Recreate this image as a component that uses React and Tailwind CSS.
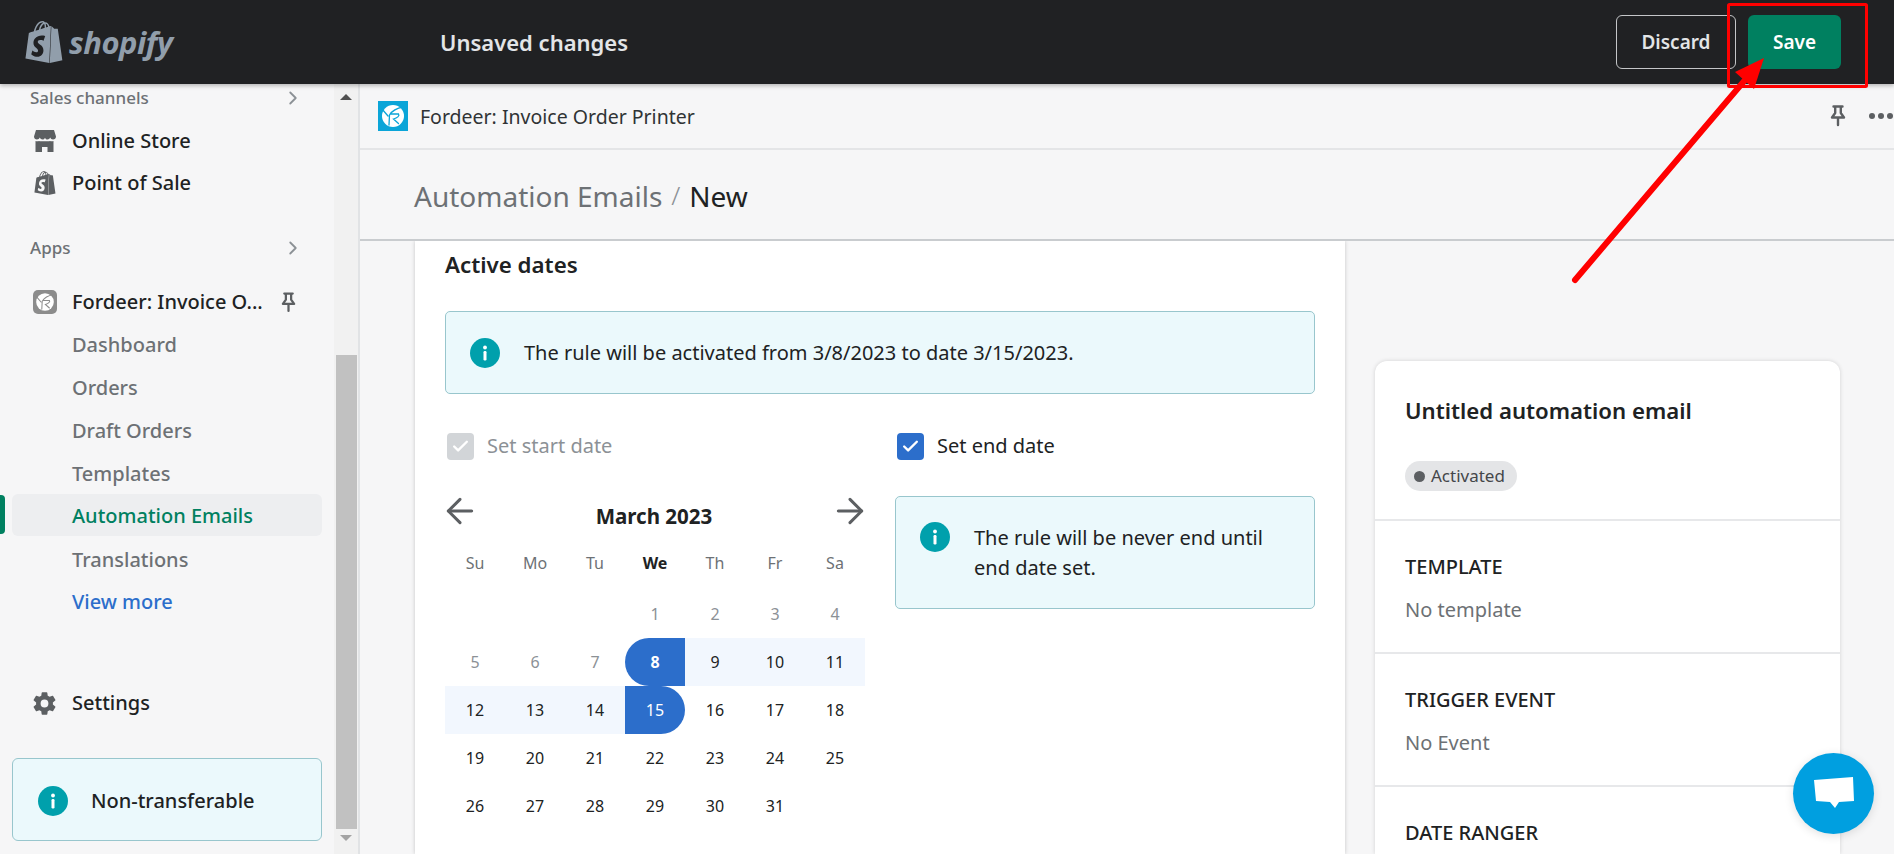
import { ChevronRight, ArrowLeft, ArrowRight, Check } from 'lucide-react';
import { SiShopify } from 'react-icons/si';
import { IoSettingsSharp } from 'react-icons/io5';

const FONT = "font-['Noto_Sans',sans-serif]";

function InfoIcon({ className = '' }) {
  return (
    <svg viewBox="0 0 30 30" className={`w-[30px] h-[30px] shrink-0 ${className}`}>
      <circle cx="15" cy="15" r="15" fill="#00a0ac" />
      <circle cx="15" cy="9.5" r="1.9" fill="#fff" />
      <rect x="13.5" y="13" width="3" height="9.5" rx="1.2" fill="#fff" />
    </svg>
  );
}

function PinIcon({ className = '' }) {
  return (
    <svg viewBox="0 0 16 22" fill="none" stroke="#5c5f62" strokeWidth="2.4" className={className}>
      <path d="M3.5 1.5h9M5.2 1.5v6.5L2 12.5h12L10.8 8V1.5M8 12.5V20" strokeLinejoin="round" strokeLinecap="round" />
    </svg>
  );
}

function StoreIcon() {
  return (
    <svg viewBox="0 0 24 24" className="w-[24px] h-[24px]" fill="#5c5f62">
      <path d="M3 1h18l2 6.5c0 1.7-1.3 3-3 3-1.3 0-2.4-.8-2.8-2-.4 1.2-1.6 2-2.8 2s-2-.7-2.4-1.8c-.4 1.1-1.3 1.8-2.4 1.8-1.2 0-2.4-.8-2.8-2-.4 1.2-1.5 2-2.8 2-1.7 0-3-1.3-3-3L3 1z" />
      <path d="M2.5 12c1 .4 2.6.4 3.5 0c1 .4 2 .5 3 .2h5c1 .3 2 .2 3-.2.9.4 2.5.4 3.5 0V23h-6v-5H9v5H2.5V12z" />
    </svg>
  );
}

function FordeerMark({ size, bg, round }) {
  return (
    <svg viewBox="0 0 30 30" style={{ width: size, height: size }} className={round ? 'rounded-[5px]' : ''}>
      <rect width="30" height="30" fill={bg} />
      <circle cx="15" cy="15" r="11" fill="#fff" />
      <path d="M25 6 C19 7 14 10 11.5 14 L11 24M13 13h7.5c1.5 2-1.5 4-5 5l5 4.5M4 8l6 7" stroke={bg} strokeWidth="1.3" fill="none" strokeLinecap="round" />
    </svg>
  );
}

function SubItem({ children, link, className = '' }) {
  const color = link ? 'text-[#2c6ecb]' : 'text-[#6d7175]';
  return (
    <div className={`h-[43px] pl-[72px] flex items-center text-[20px] font-medium ${color} ${className}`}>{children}</div>
  );
}

function NavItem({ icon, children, className = '' }) {
  return (
    <div className={`h-[42px] flex items-center ${className}`}>
      <div className="w-[72px] pl-[33px] flex items-center shrink-0">{icon}</div>
      <span className="text-[20px] font-medium text-[#202223]">{children}</span>
    </div>
  );
}

function SectionHead({ children, className = '' }) {
  return (
    <div className={`h-[26px] pl-[30px] pr-[30px] flex items-center justify-between ${className}`}>
      <span className="text-[17px] font-medium text-[#6d7175]">{children}</span>
      <ChevronRight size={22} strokeWidth={2} className="text-[#8c9196]" />
    </div>
  );
}

function Sidebar() {
  return (
    <aside className="w-[360px] shrink-0 flex bg-[#f6f6f7] border-r-2 border-[#e1e3e5]">
      <div className="w-[334px] shrink-0 relative pt-[1px]">
        <SectionHead>Sales channels</SectionHead>
        <div className="mt-[9px]">
          <NavItem icon={<StoreIcon />}>Online Store</NavItem>
          <NavItem icon={<SiShopify size={24} className="text-[#5c5f62]" />}>Point of Sale</NavItem>
        </div>
        <SectionHead className="mt-[31px]">Apps</SectionHead>
        <div className="mt-[20px] h-[42px] flex items-center">
          <div className="w-[72px] pl-[33px] shrink-0">
            <FordeerMark size={24} bg="#8c8c8c" round />
          </div>
          <span className="text-[20px] font-medium text-[#202223] w-[198px] whitespace-nowrap overflow-hidden">Fordeer: Invoice O...</span>
          <PinIcon className="w-[15px] h-[21px] ml-[11px]" />
        </div>
        <SubItem>Dashboard</SubItem>
        <SubItem>Orders</SubItem>
        <SubItem>Draft Orders</SubItem>
        <SubItem>Templates</SubItem>
        <div className="relative">
          <div className="absolute left-0 top-[1px] w-[5px] h-[39px] rounded-r bg-[#008060]" />
          <div className="mx-[12px] h-[42px] -mt-[1px] mb-[1px] pl-[60px] pt-[2px] flex items-center rounded-[6px] bg-[#edeef0] text-[20px] font-medium text-[#008060]">
            Automation Emails
          </div>
        </div>
        <SubItem className="pt-[2px]">Translations</SubItem>
        <SubItem link>View more</SubItem>
        <NavItem className="mt-[59px]" icon={<IoSettingsSharp size={25} className="text-[#5c5f62] -ml-[1px]" />}>Settings</NavItem>
        <div className="mt-[34px] mx-[12px] h-[83px] pt-[2px] rounded-[6px] border border-[#98c6cd] bg-[#ebf9fc] flex items-center pl-[25px]">
          <InfoIcon />
          <span className="ml-[23px] text-[20px] font-medium text-[#202223]">Non-transferable</span>
        </div>
      </div>
      {/* Scrollbar */}
      <div className="w-[24px] bg-[#f1f1f1] flex flex-col items-center">
        <div className="h-[26px] flex items-center justify-center">
          <div className="w-0 h-0 border-x-[6px] border-x-transparent border-b-[6px] border-b-[#505050]" />
        </div>
        <div className="w-[21px] mt-[245px] h-[474px] bg-[#c1c1c1]" />
        <div className="mt-[6px] w-0 h-0 border-x-[6px] border-x-transparent border-t-[6px] border-t-[#a3a3a3]" />
      </div>
    </aside>
  );
}

function Banner({ className = '', children, top }) {
  return (
    <div className={`rounded-[5px] border border-[#98c6cd] bg-[#ebf9fc] flex ${top ? 'items-start' : 'items-center'} ${className}`}>
      {children}
    </div>
  );
}

const weeks = [
  [null, null, null, 1, 2, 3, 4],
  [5, 6, 7, 8, 9, 10, 11],
  [12, 13, 14, 15, 16, 17, 18],
  [19, 20, 21, 22, 23, 24, 25],
  [26, 27, 28, 29, 30, 31, null],
];

function DayCell({ day }) {
  if (!day) return <div className="h-[48px]" />;
  let cls = 'text-[#202223]';
  if (day < 8) cls = 'text-[#8c9196]';
  if (day > 8 && day < 15) cls = 'bg-[#f2f7fe] text-[#202223]';
  if (day === 8) cls = 'bg-[#2c6ecb] text-white font-bold rounded-l-[24px]';
  if (day === 15) cls = 'bg-[#2c6ecb] text-white rounded-r-[24px]';
  return <div className={`h-[48px] flex items-center justify-center text-[16px] ${cls}`}>{day}</div>;
}

function Calendar() {
  const heads = ['Su', 'Mo', 'Tu', 'We', 'Th', 'Fr', 'Sa'];
  return (
    <div className="w-[420px]">
      <div className="h-[42px] mb-[12px] flex items-center justify-between relative">
        <ArrowLeft size={40} strokeWidth={1.8} className="text-[#5c5f62] -ml-[5px] -mt-[10px]" />
        <span className="text-[20.5px] font-bold text-[#202223] -ml-[2px]">March 2023</span>
        <ArrowRight size={40} strokeWidth={1.8} className="text-[#5c5f62] -mr-[5px] -mt-[10px]" />
      </div>
      <div className="grid grid-cols-7">
        {heads.map((h) => (
          <div key={h} className={`h-[28px] mb-[13px] flex items-center justify-center text-[16px] ${h === 'We' ? 'font-bold text-[#202223]' : 'text-[#6d7175]'}`}>
            {h}
          </div>
        ))}
      </div>
      <div className="grid grid-cols-7">
        {weeks.flat().map((d, i) => (
          <DayCell key={i} day={d} />
        ))}
      </div>
    </div>
  );
}

function SideSection({ title, value }) {
  return (
    <div className="h-[133px] border-b-2 border-[#e7e8ea] pl-[30px] pt-[31px]">
      <div className="text-[20px] font-medium text-[#202223] leading-[30px]">{title}</div>
      {value && <div className="mt-[13px] text-[20px] text-[#6d7175] leading-[30px]">{value}</div>}
    </div>
  );
}

function Overlay() {
  return (
    <svg className="absolute inset-0 z-20 w-full h-full pointer-events-none" viewBox="0 0 1894 854">
      <rect x="1728.5" y="4.5" width="138" height="82" fill="none" stroke="#ff0000" strokeWidth="3" rx="1" />
      <line x1="1575" y1="280" x2="1745" y2="80" stroke="#ff0000" strokeWidth="6" strokeLinecap="round" />
      <polygon points="1764,58 1735,72 1754,89" fill="#ff0000" />
    </svg>
  );
}

export default function App() {
  return (
    <div className={`relative h-screen w-full overflow-hidden bg-[#f6f6f7] flex flex-col ${FONT}`}>
      {/* Top bar */}
      <header className="h-[84px] shrink-0 bg-[#202123] flex items-center shadow-[0_2px_4px_rgba(0,0,0,0.25)] relative z-10">
        <div className="w-[440px] shrink-0 pl-[23px] flex items-center">
          <SiShopify size={42} className="text-[#919eab]" />
          <span className="ml-[4px] text-[31px] font-bold italic text-[#919eab] tracking-[-0.5px]">shopify</span>
        </div>
        <span className="text-[22px] font-semibold text-[#e3e5e7]">Unsaved changes</span>
        <div className="ml-auto flex items-center gap-[12px] pr-[53px]">
          <button className="w-[120px] h-[54px] rounded-[6px] border border-[#c4c6c8] text-[19px] font-semibold text-[#e3e5e7]">Discard</button>
          <button className="w-[93px] h-[54px] rounded-[6px] bg-[#008060] text-[19px] font-semibold text-white">Save</button>
        </div>
      </header>

      <div className="flex-1 flex min-h-0">
        <Sidebar />
        <main className="flex-1 min-w-0 flex flex-col">
          <div className="h-[66px] shrink-0 border-b-2 border-[#e4e5e7] flex items-center pl-[18px]">
            <FordeerMark size={30} bg="#0ba5d8" />
            <span className="ml-[12px] mt-[2px] text-[19.5px] text-[#303335]">Fordeer: Invoice Order Printer</span>
            <PinIcon className="ml-auto w-[16px] h-[22px]" />
            <div className="ml-[23px] mr-[1px] flex gap-[3px]">
              <span className="w-[6px] h-[6px] rounded-full bg-[#5c5f62]" />
              <span className="w-[6px] h-[6px] rounded-full bg-[#5c5f62]" />
              <span className="w-[6px] h-[6px] rounded-full bg-[#5c5f62]" />
            </div>
          </div>
          <div className="h-[91px] shrink-0 border-b-2 border-[#c9cccf] pl-[54px] flex items-center">
            <span className="text-[28px] text-[#6d7175] mt-[2px]">Automation Emails</span>
            <span className="mx-[9px] text-[26px] font-light text-[#8c9196] mt-[2px]">/</span>
            <span className="text-[28px] text-[#202223] mt-[2px]">New</span>
          </div>
          <div className="flex-1 min-h-0 flex pl-[55px] overflow-hidden">
            {/* Main card */}
            <div className="w-[930px] shrink-0 h-full bg-white shadow-[0_0_4px_rgba(0,0,0,0.2)] px-[30px]">
              <h2 className="mt-[8px] h-[32px] flex items-center text-[22.3px] font-semibold text-[#202223]">Active dates</h2>
              <Banner className="mt-[30px] h-[83px] w-[870px] pl-[24px]">
                <InfoIcon />
                <span className="ml-[24px] text-[20px] text-[#202223]">The rule will be activated from 3/8/2023 to date 3/15/2023.</span>
              </Banner>
              <div className="mt-[25px] flex">
                <div className="w-[450px] shrink-0">
                  <div className="h-[54px] flex items-center pl-[2px]">
                    <span className="w-[27px] h-[27px] rounded-[4px] bg-[#d2d5d8] flex items-center justify-center">
                      <Check size={19} strokeWidth={3} className="text-white" />
                    </span>
                    <span className="ml-[13px] text-[20px] text-[#8c9196]">Set start date</span>
                  </div>
                  <div className="mt-[22px]">
                    <Calendar />
                  </div>
                </div>
                <div className="w-[420px]">
                  <div className="h-[54px] flex items-center pl-[2px]">
                    <span className="w-[27px] h-[27px] rounded-[4px] bg-[#2c6ecb] flex items-center justify-center">
                      <Check size={19} strokeWidth={3} className="text-white" />
                    </span>
                    <span className="ml-[13px] text-[20px] text-[#202223]">Set end date</span>
                  </div>
                  <Banner top className="mt-[23px] h-[113px] pl-[24px] pt-[25px]">
                    <InfoIcon />
                    <span className="ml-[24px] mt-[1px] text-[20px] leading-[30px] text-[#202223] w-[320px]">The rule will be never end until end date set.</span>
                  </Banner>
                </div>
              </div>
            </div>
            {/* Summary card */}
            <div className="ml-[30px] mt-[120px] w-[465px] shrink-0 bg-white rounded-t-[12px] shadow-[0_0_4px_rgba(0,0,0,0.15)]">
              <div className="h-[160px] border-b-2 border-[#e7e8ea] pl-[30px] pt-[30px]">
                <div className="text-[22.2px] font-semibold text-[#202223] leading-[40px]">Untitled automation email</div>
                <div className="mt-[30px] inline-flex items-center h-[30px] rounded-full bg-[#e4e5e7] pl-[9px] pr-[12px]">
                  <span className="w-[11px] h-[11px] rounded-full bg-[#5c5f62]" />
                  <span className="ml-[6px] text-[17px] text-[#44474a]">Activated</span>
                </div>
              </div>
              <SideSection title="TEMPLATE" value="No template" />
              <SideSection title="TRIGGER EVENT" value="No Event" />
              <div className="pl-[30px] pt-[31px] text-[20px] font-medium text-[#202223] leading-[30px]">DATE RANGER</div>
            </div>
          </div>
        </main>
      </div>

      {/* Chat bubble */}
      <div className="absolute z-20 left-[1793px] top-[753px] w-[81px] h-[81px] rounded-full bg-[#009fe0] shadow-[0_2px_10px_rgba(0,0,0,0.12)] flex items-center justify-center">
        <svg viewBox="0 0 40 34" className="w-[40px] h-[34px]" fill="#fff">
          <path d="M0 3 L39 0 L40 24 L25 25 L21 31 L16 25 L2 24 Z" />
        </svg>
      </div>

      <Overlay />
    </div>
  );
}
